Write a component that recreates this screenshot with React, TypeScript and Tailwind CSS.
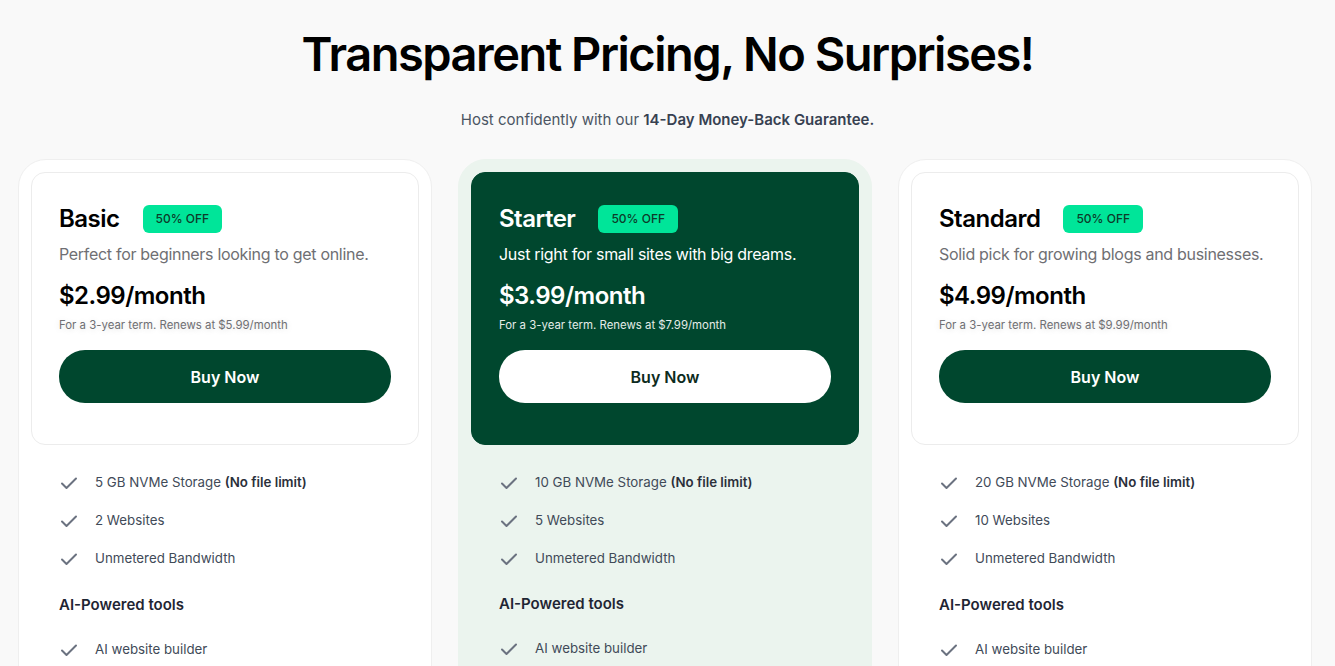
import React from "react";

const Check = () => (
  <svg width="20" height="20" viewBox="0 0 20 20" fill="none" stroke="#6b7280" strokeWidth="2" strokeLinecap="round" strokeLinejoin="round" className="shrink-0">
    <path d="M3 10.5l4.5 4.5L17 5.5" />
  </svg>
);

type Plan = {
  name: string;
  desc: string;
  price: string;
  renew: string;
  storage: string;
  sites: string;
  featured?: boolean;
};

const plans: Plan[] = [
  { name: "Basic", desc: "Perfect for beginners looking to get online.", price: "$2.99/month", renew: "For a 3-year term. Renews at $5.99/month", storage: "5 GB", sites: "2 Websites" },
  { name: "Starter", desc: "Just right for small sites with big dreams.", price: "$3.99/month", renew: "For a 3-year term. Renews at $7.99/month", storage: "10 GB", sites: "5 Websites", featured: true },
  { name: "Standard", desc: "Solid pick for growing blogs and businesses.", price: "$4.99/month", renew: "For a 3-year term. Renews at $9.99/month", storage: "20 GB", sites: "10 Websites" },
];

function Card({ p }: { p: Plan }) {
  const f = p.featured;
  return (
    <div className={`w-[414px] h-[520px] rounded-t-[28px] p-[12px] pb-0 border ${f ? "bg-[#ebf4ee] border-[#ebf4ee]" : "bg-white border-[#efefef]"}`}>
      <div className={`rounded-[14px] px-[27px] pt-[32px] pb-[41px] ${f ? "bg-[#00472e] border border-[#00472e]" : "bg-white border border-[#ececec]"}`}>
        <div className="flex items-center gap-[23px] h-[28px]">
          <span className={`text-[24px] font-semibold tracking-[-0.5px] ${f ? "text-white" : "text-black"}`}>{p.name}</span>
          <span className="h-[28px] px-[13px] rounded-[6px] bg-[#00e599] text-[#0d3b2a] text-[12px] font-medium flex items-center">50% OFF</span>
        </div>
        <p className={`mt-[9px] text-[16px] leading-[24px] tracking-[-0.3px] whitespace-nowrap ${f ? "text-white" : "text-[#6f6f73]"}`}>{p.desc}</p>
        <div className={`mt-[15px] text-[24px] font-semibold leading-[30px] tracking-[-0.5px] ${f ? "text-white" : "text-black"}`}>{p.price}</div>
        <div className={`mt-[6px] text-[11.4px] leading-[16px] ${f ? "text-[#e4ece8]" : "text-[#6f6f73] [text-shadow:0_1px_6px_rgba(0,0,0,0.15)]"}`}>{p.renew}</div>
        <button className={`mt-[17px] w-full h-[53px] rounded-[26px] text-[16px] font-semibold ${f ? "bg-white text-[#0d2b20]" : "bg-[#00472e] text-white"}`}>Buy Now</button>
      </div>
      <div className="pl-[28px] pt-[28px]">
        <ul className="flex flex-col gap-[18px] text-[13.3px] text-[#414a58]">
          <li className="flex items-center gap-[16px] h-[20px]"><Check /><span>{p.storage} NVMe Storage <b className="font-semibold text-[#2b303b]">(No file limit)</b></span></li>
          <li className="flex items-center gap-[16px] h-[20px]"><Check /><span>{p.sites}</span></li>
          <li className="flex items-center gap-[16px] h-[20px]"><Check /><span>Unmetered Bandwidth</span></li>
        </ul>
        <div className={`${f ? "mt-[25px]" : "mt-[26px]"} text-[15px] font-semibold text-[#1f2533] leading-[20px]`}>AI-Powered tools</div>
        <ul className="mt-[25px] flex flex-col gap-[18px] text-[13.3px] text-[#414a58]">
          <li className="flex items-center gap-[16px] h-[20px]"><Check /><span>AI website builder</span></li>
        </ul>
      </div>
    </div>
  );
}

export default function App() {
  return (
    <div className="h-[666px] overflow-hidden bg-[#f9f9f9] font-['Inter','Liberation_Sans',sans-serif]">
      <h1 className="pt-[24px] text-center text-[47px] leading-[60px] font-semibold tracking-[-1.5px] text-black">Transparent Pricing, No Surprises!</h1>
      <p className="mt-[26px] text-center text-[15px] leading-[20px] text-[#4b5563]">
        Host confidently with our <span className="font-semibold text-[#374151]">14-Day Money-Back Guarantee.</span>
      </p>
      <div className="mt-[29px] pl-[18px] flex gap-[26px]">
        {plans.map((p) => (
          <Card key={p.name} p={p} />
        ))}
      </div>
    </div>
  );
}
